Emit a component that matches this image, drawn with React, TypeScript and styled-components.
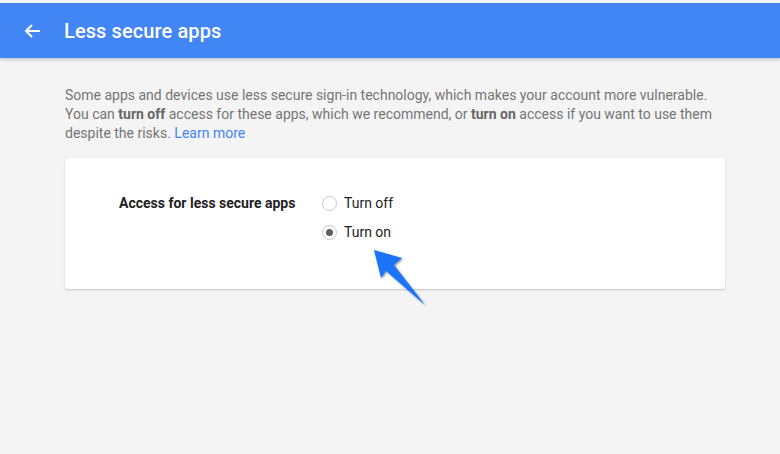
import React from "react";
import styled, { createGlobalStyle } from "styled-components";

const Global = createGlobalStyle`
  html, body { margin: 0; padding: 0; background: #f4f4f4; }
  body { font-family: Roboto, "Noto Sans", Arial, sans-serif; }
  #root { min-height: 454px; }
`;

const Page = styled.div`
  width: 780px;
  height: 454px;
  background: #f4f4f4;
  padding-top: 3px;
  box-sizing: border-box;
  position: relative;
  overflow: hidden;
`;

const Header = styled.header`
  height: 55px;
  background: #4285f4;
  display: flex;
  align-items: center;
  box-shadow: 0 2px 3px rgba(0, 0, 0, 0.18);
  color: #fff;
`;

const BackButton = styled.button`
  width: 22px;
  height: 22px;
  margin-left: 21px;
  margin-right: 21px;
  padding: 0;
  border: none;
  background: transparent;
  display: flex;
  align-items: center;
  justify-content: center;
  cursor: pointer;
`;

const Title = styled.h1`
  margin: 0;
  font-size: 20px;
  font-weight: 500;
  letter-spacing: 0.1px;
`;

const Content = styled.main`
  padding: 28px 55px 0 65px;
`;

const Intro = styled.p`
  margin: 0;
  font-size: 14px;
  line-height: 19px;
  color: #757575;
  width: 662px;
`;

const Strong = styled.b`
  font-weight: 700;
  color: #666;
`;

const Link = styled.a`
  color: #4285f4;
  text-decoration: none;
`;

const Card = styled.section`
  margin-top: 15px;
  width: 660px;
  height: 131px;
  background: #fff;
  border-radius: 3px;
  box-shadow: 0 1px 2px rgba(0, 0, 0, 0.2);
  box-sizing: border-box;
  padding: 35px 0 0 54px;
  display: flex;
`;

const Label = styled.div`
  width: 203px;
  font-size: 14px;
  font-weight: 700;
  color: #222;
  line-height: 20px;
`;

const Options = styled.div`
  display: flex;
  flex-direction: column;
  gap: 9px;
`;

const Option = styled.label`
  display: flex;
  align-items: center;
  gap: 7px;
  font-size: 14px;
  color: #222;
  line-height: 20px;
  height: 20px;
`;

const Radio = styled.span<{ $checked?: boolean }>`
  width: 15px;
  height: 15px;
  border-radius: 50%;
  border: 1px solid #c8c8c8;
  background: #fff;
  display: flex;
  align-items: center;
  justify-content: center;
  box-sizing: border-box;
  &::after {
    content: "";
    width: 7px;
    height: 7px;
    border-radius: 50%;
    background: ${(p) => (p.$checked ? "#5f5f5f" : "transparent")};
  }
`;

const Pointer = styled.svg`
  position: absolute;
  left: 370px;
  top: 246px;
  overflow: visible;
`;

export default function App() {
  return (
    <Page>
      <Global />
      <Header>
        <BackButton aria-label="Back">
          <svg width="18" height="18" viewBox="0 0 18 18">
            <path
              d="M17 9H3M9 3L3 9l6 6"
              fill="none"
              stroke="#fff"
              strokeWidth="2"
            />
          </svg>
        </BackButton>
        <Title>Less secure apps</Title>
      </Header>
      <Content>
        <Intro>
          Some apps and devices use less secure sign-in technology, which makes
          your account more vulnerable. You can <Strong>turn off</Strong> access
          for these apps, which we recommend, or <Strong>turn on</Strong> access
          if you want to use them despite the risks.{" "}
          <Link href="#">Learn more</Link>
        </Intro>
        <Card>
          <Label>Access for less secure apps</Label>
          <Options>
            <Option>
              <Radio />
              Turn off
            </Option>
            <Option>
              <Radio $checked />
              Turn on
            </Option>
          </Options>
        </Card>
      </Content>
      <Pointer width="60" height="64" viewBox="0 0 60 64">
        <defs>
          <filter id="sh" x="-30%" y="-30%" width="160%" height="160%">
            <feDropShadow dx="1" dy="1" stdDeviation="1.2" floodColor="#000" floodOpacity="0.45" />
          </filter>
        </defs>
        <polygon
          points="4,4 32,12 24,19 55,59 16,25 11,32"
          fill="#1a73f8"
          filter="url(#sh)"
        />
      </Pointer>
    </Page>
  );
}
